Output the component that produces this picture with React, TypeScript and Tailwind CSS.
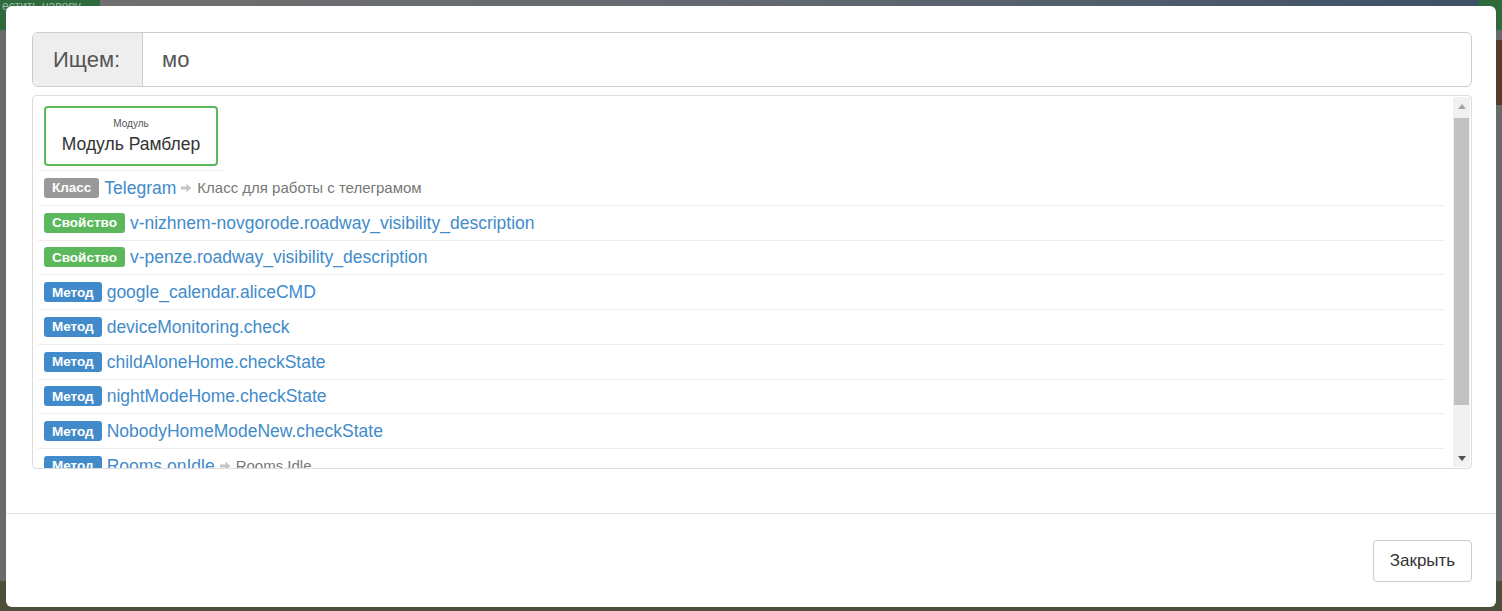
import React from "react";

type Kind = "class" | "prop" | "method";

type Row = {
  kind: Kind;
  name: string;
  desc?: string;
};

const ROWS: Row[] = [
  { kind: "class", name: "Telegram", desc: "Класс для работы с телеграмом" },
  { kind: "prop", name: "v-nizhnem-novgorode.roadway_visibility_description" },
  { kind: "prop", name: "v-penze.roadway_visibility_description" },
  { kind: "method", name: "google_calendar.aliceCMD" },
  { kind: "method", name: "deviceMonitoring.check" },
  { kind: "method", name: "childAloneHome.checkState" },
  { kind: "method", name: "nightModeHome.checkState" },
  { kind: "method", name: "NobodyHomeModeNew.checkState" },
  { kind: "method", name: "Rooms.onIdle", desc: "Rooms Idle" },
];

const LABELS: Record<Kind, { text: string; cls: string }> = {
  class: { text: "Класс", cls: "bg-[#999999]" },
  prop: { text: "Свойство", cls: "bg-[#5cb85c]" },
  method: { text: "Метод", cls: "bg-[#428bca]" },
};

function ArrowRight() {
  return (
    <svg width="11" height="10" viewBox="0 0 11 10" className="mx-[5px] shrink-0">
      <path d="M0 3.5h5.5V0.8L10.5 5 5.5 9.2V6.5H0z" fill="#c4c4c4" />
    </svg>
  );
}

function Scrollbar() {
  return (
    <div className="my-px mr-px flex w-[17px] shrink-0 flex-col bg-[#f1f1f1]">
      <div className="flex h-[18px] items-center justify-center">
        <svg width="8" height="5" viewBox="0 0 8 5">
          <path d="M4 0L8 5H0z" fill="#a3a3a3" />
        </svg>
      </div>
      <div className="mx-[1px] mt-[3px] h-[287px] bg-[#c1c1c1]" />
      <div className="flex-1" />
      <div className="flex h-[18px] items-center justify-center">
        <svg width="8" height="5" viewBox="0 0 8 5">
          <path d="M0 0h8L4 5z" fill="#505050" />
        </svg>
      </div>
    </div>
  );
}

function ResultRow({ row }: { row: Row }) {
  const label = LABELS[row.kind];
  return (
    <div className="flex h-[34.75px] shrink-0 items-center whitespace-nowrap border-b border-[#eeeeee] px-[6px]">
      <span
        className={`${label.cls} rounded-[3px] px-[8px] py-[2.5px] text-[13.5px] font-bold leading-[15px] text-white`}
      >
        {label.text}
      </span>
      <span className="ml-[5px] text-[17.5px] text-[#428bca]">{row.name}</span>
      {row.desc ? (
        <span className="flex items-center text-[15px] text-[#777777]">
          <ArrowRight />
          {row.desc}
        </span>
      ) : null}
    </div>
  );
}

export default function App() {
  return (
    <div className="relative h-[611px] w-full overflow-hidden bg-[#6a6a6a] font-['Liberation_Sans',Arial,sans-serif]">
      {/* dimmed page behind the dialog */}
      <div className="flex h-[30px]">
        <div className="w-[100px] bg-[#2f6a3c] pl-[2px] text-[12px] leading-[12px] text-[#9ab8a2]">
          естить навору
        </div>
        <div className="flex-1 bg-gradient-to-r from-[#6f6f6f] via-[#626870] to-[#3d5166]" />
        <div className="w-[24px] bg-[#2f6a3c]" />
      </div>
      <div className="ml-auto mt-[10px] h-[65px] w-[8px] bg-[#5a3a2c]" />
      <div className="absolute bottom-0 left-0 right-0 h-[30px] bg-[#4e4e3a]" />

      <div className="absolute bottom-[4px] left-[6px] right-[6px] top-[6px] flex flex-col rounded-[6px] bg-white text-[#333333]">
        <div className="flex flex-1 flex-col pl-[26px] pr-[24px] pt-[26px]">
          <div className="flex h-[55px] rounded-[6px] border border-[#cccccc]">
            <div className="flex w-[110px] items-center rounded-l-[6px] border-r border-[#cccccc] bg-[#eeeeee] pl-[20px] text-[22px] text-[#555555]">
              Ищем:
            </div>
            <div className="flex flex-1 items-center pl-[19px] text-[22px] text-[#555555]">мо</div>
          </div>

          <div className="mt-[8px] flex h-[374px] overflow-hidden rounded-[4px] border border-[#dddddd]">
            <div className="flex min-w-0 flex-1 flex-col overflow-hidden pl-[5px] pr-[8px]">
              <div className="self-start border-b border-[#eeeeee] px-[6px] pb-[4px] pt-[10px]">
                <div className="flex h-[60px] w-[174px] flex-col items-center justify-center rounded-[4px] border-2 border-[#5cb85c]">
                  <span className="text-[10px] leading-[12px] text-[#555555]">Модуль</span>
                  <span className="mt-[4px] text-[17.5px] leading-[20px] text-[#333333]">Модуль Рамблер</span>
                </div>
              </div>
              {ROWS.map((row) => (
                <ResultRow key={row.name} row={row} />
              ))}
            </div>
            <Scrollbar />
          </div>
        </div>

        <div className="flex h-[94px] items-center justify-end border-t border-[#e5e5e5] pr-[24px]">
          <button
            type="button"
            className="h-[42px] w-[99px] rounded-[4px] border border-[#cccccc] bg-white text-[17px] text-[#333333]"
          >
            Закрыть
          </button>
        </div>
      </div>
    </div>
  );
}
